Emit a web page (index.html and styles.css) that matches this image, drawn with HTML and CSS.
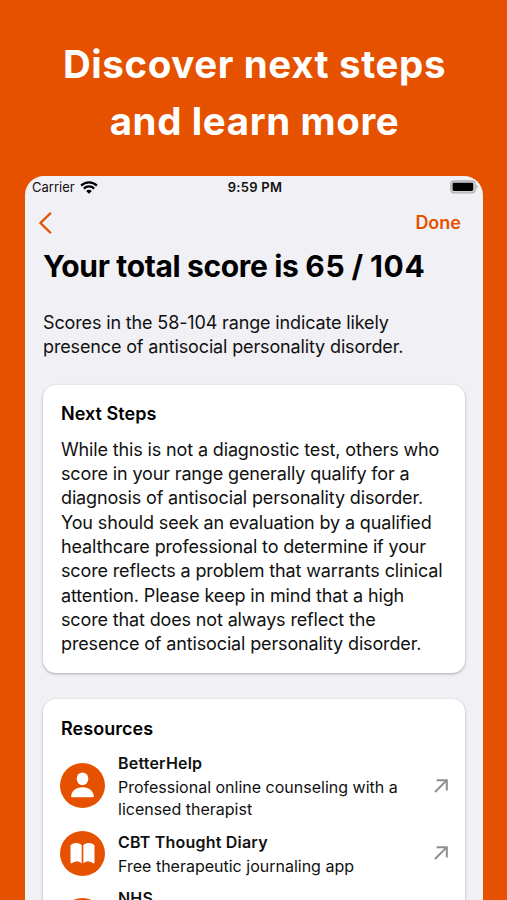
FILE: index.html
```
<!DOCTYPE html>
<html lang="en">

<head>
    <meta charset="UTF-8">
    <meta name="viewport" content="width=device-width, initial-scale=1.0">
    <title>Your total score</title>
    <link rel="stylesheet" href="styles.css">
</head>

<body>
    <h1 class="headline">Discover next steps<br>and learn more</h1>

    <main class="phone">
        <div class="status-bar">
            <div class="carrier">
                <span class="carrier-name">Carrier</span>
                <svg class="wifi" viewBox="0 0 18 13">
                    <path d="M1.1 4.6A11.3 11.3 0 0 1 16.9 4.6" />
                    <path d="M3.8 7.6A7.4 7.4 0 0 1 14.2 7.6" />
                    <path class="wifi-dot" d="M9 12.8L6.1 9.9A4.4 4.4 0 0 1 11.9 9.9Z" />
                </svg>
            </div>
            <div class="time">9:59 PM</div>
            <svg class="battery" viewBox="0 0 28 14">
                <rect x="0.8" y="0.8" width="24.4" height="12" rx="3.4" fill="#d2d2d6" stroke="#b0b0b4" stroke-width="1.2" />
                <rect x="2.6" y="2.7" width="20.6" height="8.2" rx="1.4" />
                <path d="M26.3 4.8Q27.6 5.3 27.6 6.8T26.3 8.8Z" fill="#a0a0a4" />
            </svg>
        </div>

        <div class="nav-bar">
            <svg class="back" viewBox="0 0 14 22">
                <path d="M12.2 1.5L2.4 11L12.2 20.5" />
            </svg>
            <div class="done">Done</div>
        </div>

        <h2 class="score"><span class="score-label">Your total score is </span><span class="score-value">65 / 104</span></h2>
        <p class="summary">
            <span class="line">Scores in the 58-104 range indicate likely</span>
            <span class="line">presence of antisocial personality disorder.</span>
        </p>

        <section class="card next-steps">
            <h3 class="card-title">Next Steps</h3>
            <p class="card-text">
                <span class="line">While this is not a diagnostic test, others who</span>
                <span class="line">score in your range generally qualify for a</span>
                <span class="line">diagnosis of antisocial personality disorder.</span>
                <span class="line">You should seek an evaluation by a qualified</span>
                <span class="line">healthcare professional to determine if your</span>
                <span class="line">score reflects a problem that warrants clinical</span>
                <span class="line">attention. Please keep in mind that a high</span>
                <span class="line">score that does not always reflect the</span>
                <span class="line">presence of antisocial personality disorder.</span>
            </p>
        </section>

        <section class="card resources">
            <h3 class="card-title resources-title">Resources</h3>

            <div class="resource">
                <svg class="icon" viewBox="0 0 44 44">
                    <circle cx="22" cy="22" r="22" />
                    <ellipse class="glyph" cx="22" cy="15.4" rx="5.7" ry="6.2" />
                    <path class="glyph" d="M11.4 33.4Q10.6 33.4 11 31.6C12 26.9 16.1 23.8 22 23.8S32 26.9 33 31.6Q33.4 33.4 32.6 33.4Z" />
                </svg>
                <div class="info">
                    <div class="name">BetterHelp</div>
                    <div class="detail">Professional online counseling with a<br>licensed therapist</div>
                </div>
                <svg class="arrow" viewBox="0 0 14 14">
                    <path d="M1 13L12.6 1.4M2.6 1.2H12.8V11.6" />
                </svg>
            </div>

            <div class="resource">
                <svg class="icon" viewBox="0 0 44 44">
                    <circle cx="22" cy="22" r="22" />
                    <path class="glyph" d="M21.2 13.6V31.6Q18.8 29.6 15.9 29.7Q13.6 29.8 12 31.2Q10.3 32.2 10.3 31V13.9Q12.4 11.7 15.8 11.7Q19 11.7 21.2 13.6Z" />
                    <path class="glyph" d="M22.8 13.6V31.6Q25.2 29.6 28.1 29.7Q30.4 29.8 32 31.2Q33.7 32.2 33.7 31V13.9Q31.6 11.7 28.2 11.7Q25 11.7 22.8 13.6Z" />
                </svg>
                <div class="info">
                    <div class="name">CBT Thought Diary</div>
                    <div class="detail">Free therapeutic journaling app</div>
                </div>
                <svg class="arrow" viewBox="0 0 14 14">
                    <path d="M1 13L12.6 1.4M2.6 1.2H12.8V11.6" />
                </svg>
            </div>

            <div class="resource tall">
                <svg class="icon" viewBox="0 0 44 44">
                    <circle cx="22" cy="22" r="22" />
                </svg>
                <div class="info">
                    <div class="name">NHS</div>
                </div>
            </div>
        </section>
    </main>
</body>

</html>
```
FILE: styles.css
```
* {
    box-sizing: border-box;
}

body {
    margin: 0;
    height: 900px;
    overflow: hidden;
    background: #e65100;
    color: #111;
    font-family: Inter, "Liberation Sans", sans-serif;
}

h1,
h2,
h3,
p {
    margin: 0;
}

.headline {
    height: 176px;
    padding-top: 36px;
    padding-left: 2px;
    color: #fff;
    text-align: center;
    font-size: 38.5px;
    line-height: 57px;
    font-weight: 700;
    letter-spacing: 0.6px;
}

.phone {
    width: 458px;
    height: 724px;
    margin-left: 25px;
    padding: 0 18px;
    overflow: hidden;
    background: #f1f0f5;
    border-radius: 19px 19px 0 0;
}

.status-bar {
    display: grid;
    grid-template-columns: 1fr auto 1fr;
    align-items: center;
    height: 22px;
    margin: 0 -13px 0 -11px;
    font-size: 13px;
}

.carrier {
    display: flex;
    align-items: center;
    gap: 5px;
}

.wifi {
    width: 18px;
    height: 13px;
    fill: none;
    stroke: #000;
    stroke-width: 2.2;
}

.wifi-dot {
    fill: #000;
    stroke: none;
}

.time {
    font-weight: 600;
    letter-spacing: 0.3px;
}

.battery {
    width: 28px;
    height: 14px;
    justify-self: end;
}

.nav-bar {
    display: flex;
    align-items: center;
    justify-content: space-between;
    height: 49px;
    padding-right: 4px;
    margin-left: -5px;
    color: #e65100;
}

.back {
    width: 14px;
    height: 22px;
    fill: none;
    stroke: #e65100;
    stroke-width: 2.4;
    stroke-linecap: round;
    stroke-linejoin: round;
}

.done {
    font-size: 18px;
    line-height: 24px;
    padding-top: 1px;
    font-weight: 600;
}

.score {
    color: #000;
    font-size: 30px;
    line-height: 38px;
    font-weight: 700;
    white-space: nowrap;
}

.score-label {
    letter-spacing: -0.35px;
}

.score-value {
    letter-spacing: 0.7px;
    word-spacing: -1.7px;
}

.summary {
    margin-top: 26px;
}

.line {
    display: block;
    white-space: nowrap;
}

.summary,
.card-text {
    font-size: 18px;
    line-height: 24.35px;
    letter-spacing: -0.14px;
}

.card {
    padding: 0 18px;
    background: #fff;
    border-radius: 13px;
    box-shadow: 0 1px 3px rgba(0, 0, 0, 0.3);
}

.next-steps {
    height: 288px;
    margin-top: 25px;
    padding-top: 17px;
}

.card-title {
    color: #000;
    font-size: 18px;
    line-height: 24px;
    font-weight: 600;
    letter-spacing: 0.05px;
}

.card-text {
    margin-top: 12px;
}

.resources {
    height: 330px;
    margin-top: 26px;
    padding-top: 18px;
}

.resources-title {
    margin-bottom: 10px;
}

.resource {
    display: flex;
    align-items: center;
    margin-bottom: 9px;
}

.tall {
    height: 70px;
    align-items: flex-start;
}

.tall .icon {
    margin-top: 12px;
}

.icon {
    width: 45px;
    height: 45px;
    margin-left: -1px;
    margin-right: 13px;
    fill: #e65100;
}

.glyph {
    fill: #fff;
}

.info {
    flex: 1;
    white-space: nowrap;
}

.name {
    font-size: 16px;
    line-height: 25px;
    font-weight: 600;
    letter-spacing: 0.2px;
}

.detail {
    font-size: 16px;
    line-height: 22.5px;
}

.arrow {
    width: 14px;
    height: 14px;
    margin-right: -1px;
    fill: none;
    stroke: #8e8e93;
    stroke-width: 2;
}
```
